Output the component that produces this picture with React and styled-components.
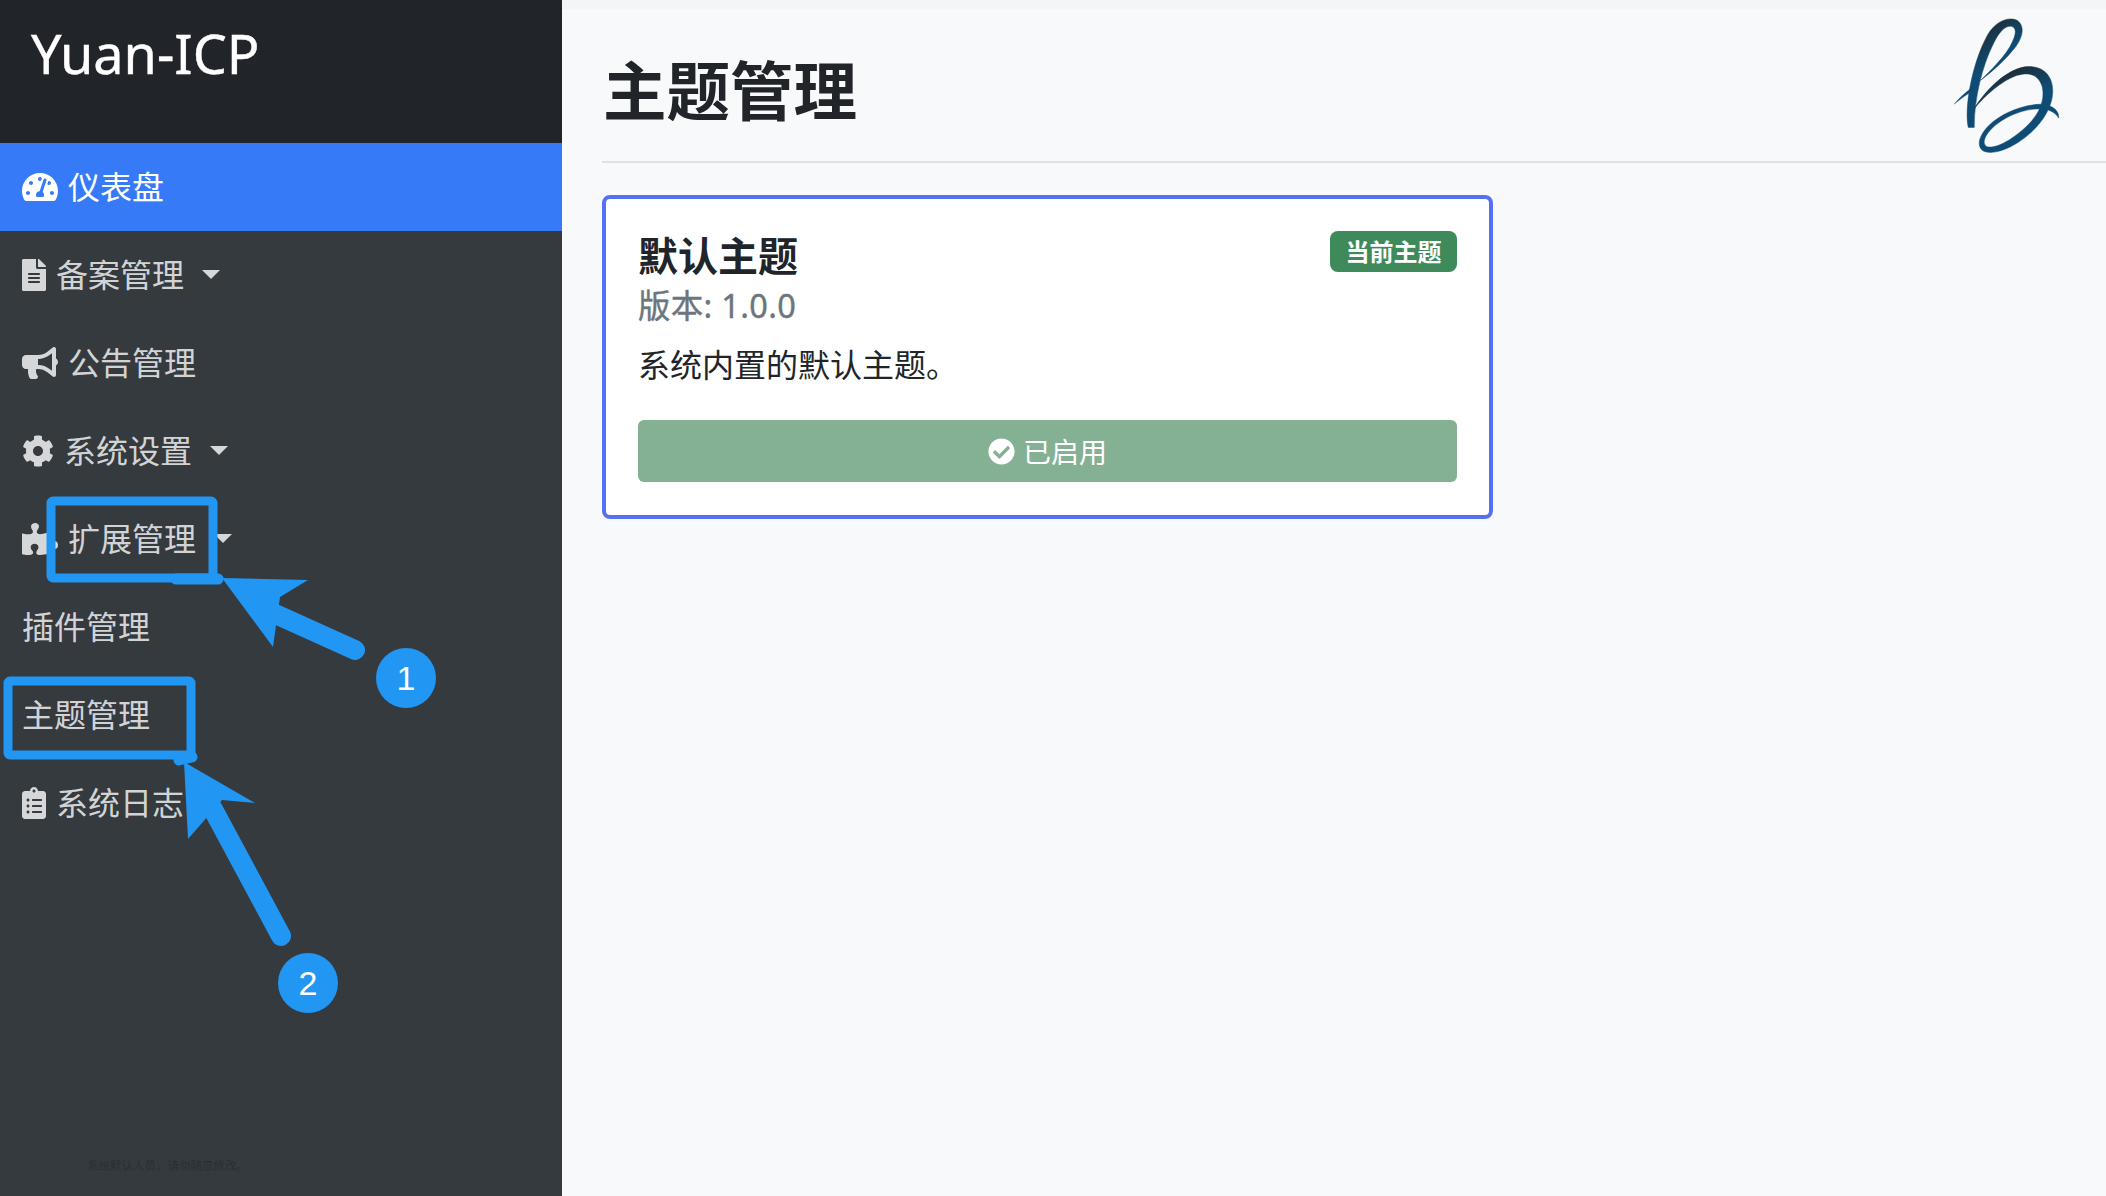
import React from 'react';
import styled, { createGlobalStyle } from 'styled-components';
import { FaTachometerAlt, FaFileAlt, FaBullhorn, FaCog, FaPuzzlePiece, FaClipboardList, FaCheckCircle } from 'react-icons/fa';

const Global = createGlobalStyle`
  html, body { margin: 0; padding: 0; background: #f8f9fa; }
  body { font-family: "Noto Sans", "Noto Sans CJK SC", sans-serif; overflow: hidden; }
`;

const Page = styled.div`
  position: relative;
  display: flex;
  width: 2106px;
  height: 1196px;
  overflow: hidden;
`;

const Sidebar = styled.aside`
  width: 562px;
  flex: none;
  background: #353a3f;
  display: flex;
  flex-direction: column;
`;

const Brand = styled.div`
  height: 143px;
  flex: none;
  box-sizing: border-box;
  background: #212529;
  color: #fff;
  padding: 13px 0 0 31px;
  font-size: 54px;
  line-height: 80px;
  -webkit-text-stroke: 0.4px #fff;
`;

const Nav = styled.nav`
  display: flex;
  flex-direction: column;
`;

const NavItem = styled.div`
  height: 88px;
  display: flex;
  align-items: center;
  padding-left: 22px;
  font-size: 32px;
  color: ${p => (p.$active ? '#fff' : 'rgba(255,255,255,.8)')};
  background: ${p => (p.$active ? '#377af7' : 'transparent')};
  svg { width: ${p => p.$iconWidth}px; height: 32px; margin-right: 10px; flex: none; }
`;

const Label = styled.span`
  margin-top: -4px;
`;

const Caret = styled.span`
  width: 0;
  height: 0;
  margin: -2px 0 0 18px;
  border-top: 9px solid rgba(255,255,255,.8);
  border-left: 9px solid transparent;
  border-right: 9px solid transparent;
`;

const Fine = styled.div`
  margin: auto 0 22px 87px;
  font-size: 11.5px;
  line-height: 16px;
  color: #2a2f33;
`;

const Main = styled.main`
  flex: 1;
  min-width: 0;
  display: flex;
  flex-direction: column;
  background: #f8f9fa;
`;

const TopStrip = styled.div`
  height: 9px;
  background: #f4f5f6;
`;

const Heading = styled.header`
  margin-left: 40px;
  height: 154px;
  box-sizing: border-box;
  padding: 4px 41px 0 1px;
  border-bottom: 2px solid #dee2e6;
  display: flex;
  justify-content: space-between;
  align-items: flex-start;
`;

const Title = styled.h1`
  margin: 36px 0 0;
  font-size: 63.5px;
  line-height: 84px;
  font-weight: 700;
  color: #212529;
`;

const Logo = styled.svg`
  width: 117px;
  height: 143px;
  flex: none;
`;

const Card = styled.section`
  margin: 32px 0 0 40px;
  width: 891px;
  height: 324px;
  box-sizing: border-box;
  padding: 32px 32px 33px;
  background: #fff;
  border: 4px solid #5570f0;
  border-radius: 8px;
  display: flex;
  flex-direction: column;
`;

const CardTop = styled.div`
  display: flex;
  justify-content: space-between;
  align-items: flex-start;
`;

const CardTitle = styled.h2`
  margin: -1px 0 0;
  font-size: 40px;
  line-height: 52px;
  font-weight: 700;
  color: #212529;
`;

const Version = styled.div`
  margin-top: 1px;
  font-size: 32.5px;
  line-height: 46px;
  letter-spacing: 0.3px;
  color: #6c757d;
  -webkit-text-stroke: 0.4px #6c757d;
`;

const Badge = styled.span`
  width: 127px;
  height: 41px;
  box-sizing: border-box;
  padding-bottom: 2px;
  display: flex;
  align-items: center;
  justify-content: center;
  background: #3f8a5b;
  color: #fff;
  font-size: 24px;
  font-weight: 700;
  border-radius: 8px;
`;

const Description = styled.p`
  margin: 13px 0 0;
  font-size: 32px;
  line-height: 46px;
  color: #212529;
`;

const Button = styled.button`
  margin-top: auto;
  height: 62px;
  border: 0;
  border-radius: 6px;
  background: #84b094;
  color: #fff;
  font: inherit;
  font-size: 28px;
  display: flex;
  align-items: center;
  justify-content: center;
  gap: 8px;
`;

const Annotations = styled.svg`
  position: absolute;
  left: 0;
  top: 0;
  width: 2106px;
  height: 1196px;
  pointer-events: none;
`;

const Step = styled.span`
  position: absolute;
  left: ${p => p.$x - 30}px;
  top: ${p => p.$y - 30}px;
  width: 60px;
  height: 60px;
  border-radius: 50%;
  background: #2196f3;
  color: #fff;
  font-family: "Liberation Sans", sans-serif;
  font-size: 34px;
  display: flex;
  align-items: center;
  justify-content: center;
`;

const items = [
  { icon: <FaTachometerAlt />, w: 36, label: '仪表盘', active: true },
  { icon: <FaFileAlt />, w: 24, label: '备案管理', caret: true },
  { icon: <FaBullhorn />, w: 36, label: '公告管理' },
  { icon: <FaCog />, w: 32, label: '系统设置', caret: true },
  { icon: <FaPuzzlePiece />, w: 36, label: '扩展管理', caret: true },
  { label: '插件管理' },
  { label: '主题管理' },
  { icon: <FaClipboardList />, w: 24, label: '系统日志' },
];

export default function App() {
  return (
    <Page>
      <Global />
      <Sidebar>
        <Brand>Yuan-ICP</Brand>
        <Nav>
          {items.map(it => (
            <NavItem key={it.label} $active={it.active} $iconWidth={it.w}>
              {it.icon}
              <Label>{it.label}</Label>
              {it.caret && <Caret />}
            </NavItem>
          ))}
        </Nav>
        <Fine>系统默认人员，请勿随意修改。</Fine>
      </Sidebar>
      <Main>
        <TopStrip />
        <Heading>
          <Title>主题管理</Title>
          <Logo viewBox="140 40 350 430">
            <defs>
              <linearGradient id="ink" x1="0" y1="0" x2="0.4" y2="1">
                <stop offset="0.1" stopColor="#212529" />
                <stop offset="0.5" stopColor="#0f4c75" />
                <stop offset="1" stopColor="#0f4c75" />
              </linearGradient>
            </defs>
            <path fill="url(#ink)" stroke="url(#ink)" strokeWidth="1.5" d="M200 384 C188 330 208 198 258 106 C282 64 322 50 347 62 C370 78 366 110 342 142 C318 174 275 214 238 242 C272 208 316 165 332 128 C346 100 344 84 330 80 C310 76 290 100 272 140 C244 198 218 292 218 384 Z" />
            <path fill="url(#ink)" stroke="url(#ink)" strokeWidth="1" d="M158 314 C172 296 190 280 212 264 L210 276 C192 288 174 300 158 314 Z" />
            <path fill="url(#ink)" stroke="url(#ink)" strokeWidth="1.5" d="M216 330 C250 275 310 212 370 202 C422 196 454 225 454 275 C454 330 410 388 360 422 C320 452 268 468 244 454 C224 440 232 408 262 378 C300 342 360 316 420 314 C450 316 474 332 472 356 C462 338 440 328 415 328 C365 328 305 352 268 390 C246 414 242 434 256 442 C285 450 340 416 380 376 C414 342 432 300 422 260 C410 226 385 216 345 228 C300 244 250 288 216 330 Z" />
          </Logo>
        </Heading>
        <Card>
          <CardTop>
            <div>
              <CardTitle>默认主题</CardTitle>
              <Version>版本: 1.0.0</Version>
            </div>
            <Badge>当前主题</Badge>
          </CardTop>
          <Description>系统内置的默认主题。</Description>
          <Button><FaCheckCircle size={27} />已启用</Button>
        </Card>
      </Main>
      <Annotations viewBox="0 0 2106 1196">
        <g fill="none" stroke="#2196f3" strokeWidth="9" strokeLinejoin="round">
          <rect x="51" y="501" width="162" height="77" rx="2" />
          <rect x="8" y="681" width="183" height="74" rx="2" />
        </g>
        <g fill="#2196f3" stroke="#2196f3" strokeLinecap="round">
          <path stroke="none" d="M222 578 L308 580 L280 597 L273 647 Z" />
          <line x1="262" y1="608" x2="355" y2="650" strokeWidth="20" />
          <line x1="176" y1="579" x2="218" y2="579" strokeWidth="11" />
          <path stroke="none" d="M184 762 L255 803 L222 800 L188 839 Z" />
          <line x1="208" y1="800" x2="281" y2="936" strokeWidth="20" />
          <line x1="179" y1="760" x2="192" y2="757" strokeWidth="11" />
        </g>
      </Annotations>
      <Step $x={406} $y={678}>1</Step>
      <Step $x={308} $y={983}>2</Step>
    </Page>
  );
}
